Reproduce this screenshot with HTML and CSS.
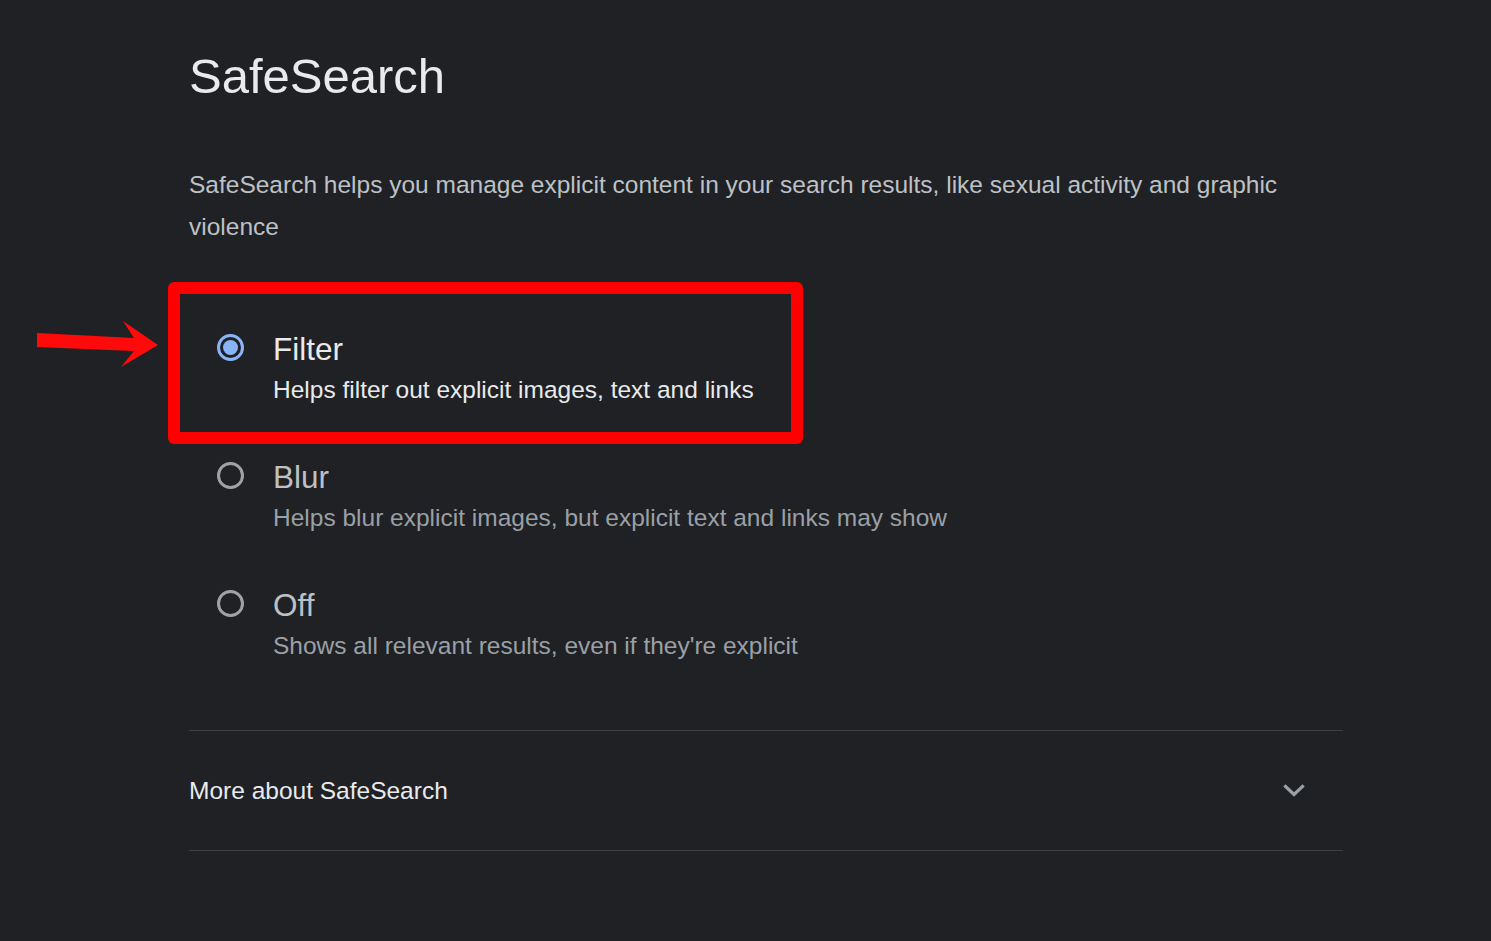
FILE: index.html
```html
<!DOCTYPE html>
<html lang="en">
<head>
<meta charset="utf-8">
<title>SafeSearch</title>
<link rel="stylesheet" href="styles.css">
</head>
<body>
<div class="page">
  <main class="content">
    <h1 class="title">SafeSearch</h1>
    <p class="intro">SafeSearch helps you manage explicit content in your search results, like sexual activity and graphic violence</p>
    <div class="options" role="radiogroup">
      <div class="option selected" role="radio" aria-checked="true">
        <div class="radio-cell"><span class="radio on"><span class="dot"></span></span></div>
        <div class="option-text">
          <div class="option-title">Filter</div>
          <div class="option-desc">Helps filter out explicit images, text and links</div>
        </div>
      </div>
      <div class="option" role="radio" aria-checked="false">
        <div class="radio-cell"><span class="radio"></span></div>
        <div class="option-text">
          <div class="option-title">Blur</div>
          <div class="option-desc">Helps blur explicit images, but explicit text and links may show</div>
        </div>
      </div>
      <div class="option" role="radio" aria-checked="false">
        <div class="radio-cell"><span class="radio"></span></div>
        <div class="option-text">
          <div class="option-title">Off</div>
          <div class="option-desc">Shows all relevant results, even if they're explicit</div>
        </div>
      </div>
    </div>
    <div class="more">
      <span class="more-label">More about SafeSearch</span>
      <svg class="chevron" width="22" height="14" viewBox="0 0 22 14" aria-hidden="true">
        <polyline points="2.5,2.5 11,10.5 19.5,2.5" fill="none" stroke="#9aa0a6" stroke-width="3.2" stroke-linecap="square"/>
      </svg>
    </div>
  </main>

  <div class="highlight-box" aria-hidden="true"></div>
  <svg class="arrow" width="140" height="70" viewBox="0 0 140 70" aria-hidden="true">
    <polygon points="7,23 104,28 93,11 128,35 91,57 104,41 7,37" fill="#ff0a0a"/>
  </svg>
</div>
</body>
</html>
```
FILE: styles.css
```css
html, body {
  margin: 0;
  padding: 0;
  background: #202124;
}

body {
  font-family: "Liberation Sans", Arial, sans-serif;
  color: #e8eaed;
}

.page {
  position: relative;
  width: 1491px;
  min-height: 941px;
  overflow: hidden;
}

.content {
  margin-left: 189px;
  width: 1154px;
  padding-top: 48px;
}

.title {
  margin: 0;
  font-size: 49px;
  line-height: 56px;
  font-weight: 400;
  color: #e8eaed;
}

.intro {
  margin: 60px 0 0;
  font-size: 24.5px;
  line-height: 42px;
  color: #bdc1c6;
}

.options {
  margin-top: 81px;
  display: flex;
  flex-direction: column;
  gap: 46px;
}

.option {
  display: flex;
  align-items: flex-start;
}

.radio-cell {
  width: 84px;
  height: 37px;
  display: flex;
  align-items: center;
  padding-left: 28px;
  box-sizing: border-box;
}

.radio {
  width: 27px;
  height: 27px;
  box-sizing: border-box;
  border: 3px solid #9fa3a7;
  border-radius: 50%;
  display: flex;
  align-items: center;
  justify-content: center;
}

.radio.on {
  border-color: #8ab4f8;
}

.dot {
  width: 15px;
  height: 15px;
  border-radius: 50%;
  background: #8ab4f8;
}

.option-title {
  font-size: 31.5px;
  line-height: 40px;
  color: #bdc1c6;
}

.option-desc {
  font-size: 24.5px;
  line-height: 42px;
  color: #9aa0a6;
}

.option.selected .option-title,
.option.selected .option-desc {
  color: #e8eaed;
}

.more {
  margin-top: 63px;
  height: 119px;
  border-top: 1px solid #3c4043;
  border-bottom: 1px solid #3c4043;
  display: flex;
  align-items: center;
  justify-content: space-between;
  padding-right: 38px;
}

.more-label {
  font-size: 24.5px;
  line-height: 32px;
  color: #e8eaed;
}

.chevron {
  display: block;
}

.highlight-box {
  position: absolute;
  left: 168px;
  top: 282px;
  width: 635px;
  height: 162px;
  box-sizing: border-box;
  border: 12px solid #ff0000;
  border-radius: 6px;
}

.arrow {
  position: absolute;
  left: 30px;
  top: 310px;
}
```
